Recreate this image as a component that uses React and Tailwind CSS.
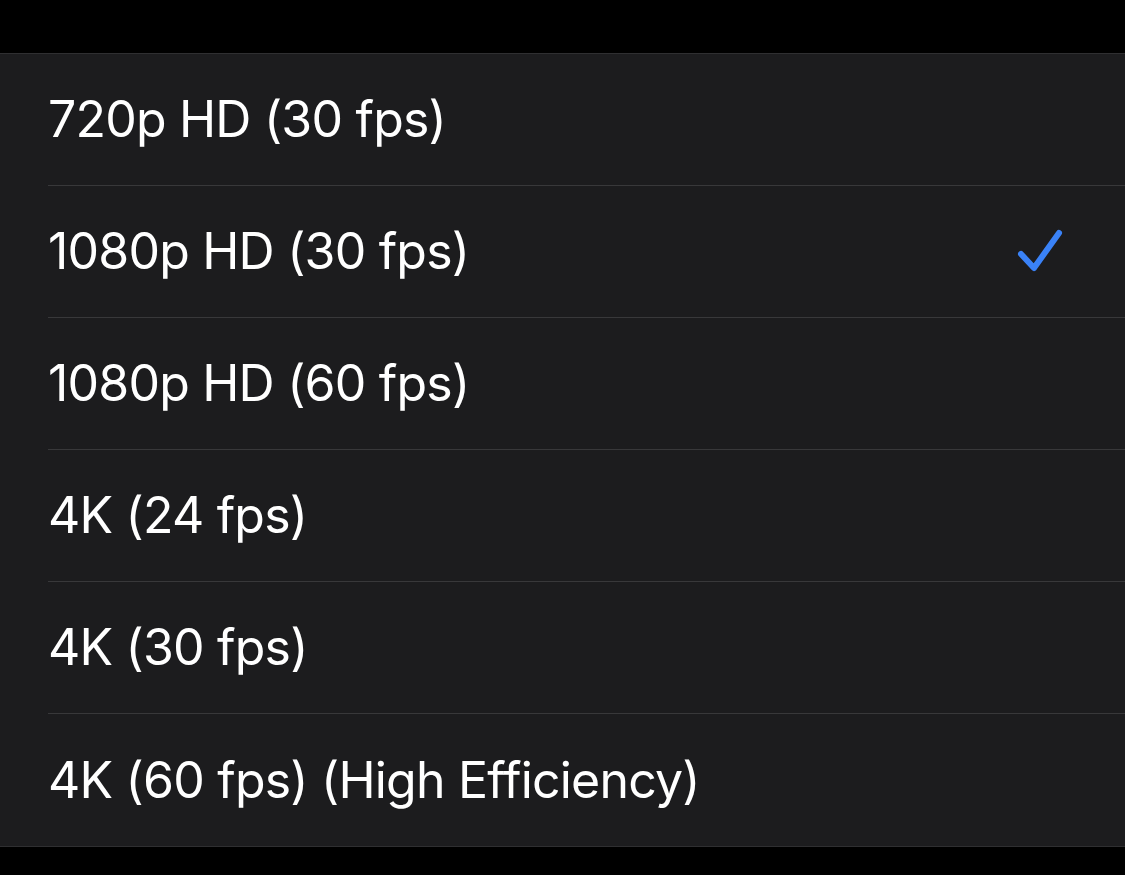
import React from 'react';

const options = [
  { label: '720p HD (30 fps)' },
  { label: '1080p HD (30 fps)', selected: true },
  { label: '1080p HD (60 fps)' },
  { label: '4K (24 fps)' },
  { label: '4K (30 fps)' },
  { label: '4K (60 fps) (High Efficiency)' },
];

function Check() {
  return (
    <svg width="46" height="45" viewBox="0 0 46 45" fill="none">
      <path
        d="M4 25 L17 39 L42 4"
        stroke="#3a82f7"
        strokeWidth="6"
        strokeLinecap="round"
        strokeLinejoin="round"
      />
    </svg>
  );
}

export default function App() {
  return (
    <div
      className="w-[1125px] h-[875px] bg-black pt-[53px] overflow-hidden"
      style={{ fontFamily: 'Inter, "Liberation Sans", sans-serif' }}
    >
      <div className="bg-[#1c1c1e] border-y border-[#2f2f31]">
        {options.map((o, i) => (
          <div key={o.label} className="pl-[48px]">
            <div
              className={
                'h-[132px] flex items-center justify-between pr-[62px] ' +
                (i < options.length - 1 ? 'border-b border-[#38383a]' : '')
              }
            >
              <span className="text-white text-[50px] tracking-[-0.8px]">{o.label}</span>
              {o.selected && <Check />}
            </div>
          </div>
        ))}
      </div>
    </div>
  );
}
